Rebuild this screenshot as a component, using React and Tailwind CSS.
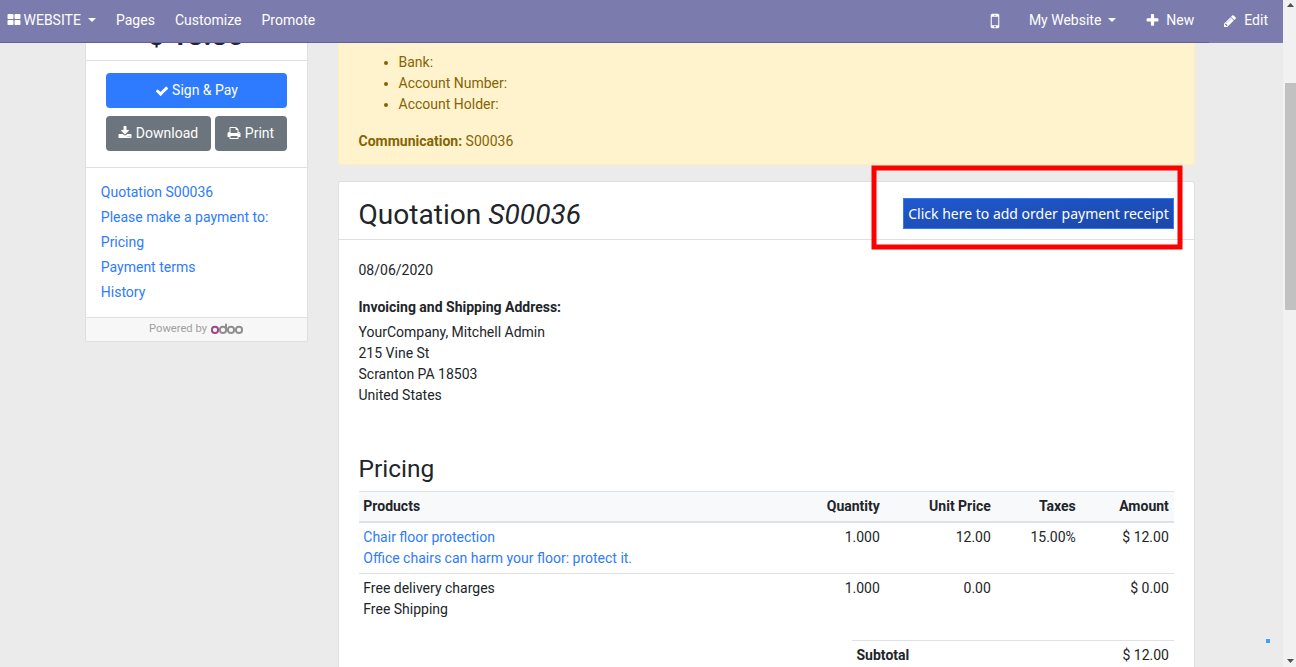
const ICONS = {
  grid: "M832 1024v384q0 52-38 90t-90 38h-512q-52 0-90-38t-38-90v-384q0-52 38-90t90-38h512q52 0 90 38t38 90zm0-768v384q0 52-38 90t-90 38h-512q-52 0-90-38t-38-90v-384q0-52 38-90t90-38h512q52 0 90 38t38 90zm896 768v384q0 52-38 90t-90 38h-512q-52 0-90-38t-38-90v-384q0-52 38-90t90-38h512q52 0 90 38t38 90zm0-768v384q0 52-38 90t-90 38h-512q-52 0-90-38t-38-90v-384q0-52 38-90t90-38h512q52 0 90 38t38 90z",
  check: "M1671 566q0 40-28 68l-724 724-136 136q-28 28-68 28t-68-28l-136-136-362-362q-28-28-28-68t28-68l136-136q28-28 68-28t68 28l294 295 656-657q28-28 68-28t68 28l136 136q28 28 28 68z",
  download: "M1344 1344q0-26-19-45t-45-19-45 19-19 45 19 45 45 19 45-19 19-45zm256 0q0-26-19-45t-45-19-45 19-19 45 19 45 45 19 45-19 19-45zm128-224v320q0 40-28 68t-68 28h-1472q-40 0-68-28t-28-68v-320q0-40 28-68t68-28h465l135 136q58 56 136 56t136-56l136-136h464q40 0 68 28t28 68zm-325-569q17 41-14 70l-448 448q-18 19-45 19t-45-19l-448-448q-31-29-14-70 17-39 59-39h256v-448q0-26 19-45t45-19h256q26 0 45 19t19 45v448h256q42 0 59 39z",
  print: "M448 1536h896v-256h-896v256zm0-640h896v-384h-160q-40 0-68-28t-28-68v-160h-640v640zm1152 64q0-26-19-45t-45-19-45 19-19 45 19 45 45 19 45-19 19-45zm128 0v416q0 13-9.5 22.5t-22.5 9.5h-224v160q0 40-28 68t-68 28h-960q-40 0-68-28t-28-68v-160h-224q-13 0-22.5-9.5t-9.5-22.5v-416q0-79 56.5-135.5t135.5-56.5h64v-544q0-40 28-68t68-28h672q40 0 88 20t76 48l152 152q28 28 48 76t20 88v256h64q79 0 135.5 56.5t56.5 135.5z",
  plus: "M1600 736v192q0 40-28 68t-68 28h-416v416q0 40-28 68t-68 28h-192q-40 0-68-28t-28-68v-416h-416q-40 0-68-28t-28-68v-192q0-40 28-68t68-28h416v-416q0-40 28-68t68-28h192q40 0 68 28t28 68v416h416q40 0 68 28t28 68z",
  pencil: "M491 1536l91-91-235-235-91 91v107h128v128h107zm523-928q0-22-22-22-10 0-17 7l-542 542q-7 7-7 17 0 22 22 22 10 0 17-7l542-542q7-7 7-17zm-54-192l416 416-832 832h-416v-416zm683 96q0 53-37 90l-166 166-416-416 166-165q36-38 90-38 53 0 91 38l235 234q37 39 37 91z",
  mobile: "M976 1408q0-33-23.5-56.5t-56.5-23.5-56.5 23.5-23.5 56.5 23.5 56.5 56.5 23.5 56.5-23.5 23.5-56.5zm208-160v-704q0-13-9.5-22.5t-22.5-9.5h-512q-13 0-22.5 9.5t-9.5 22.5v704q0 13 9.5 22.5t22.5 9.5h512q13 0 22.5-9.5t9.5-22.5zm-192-848q0-16-16-16h-160q-16 0-16 16t16 16h160q16 0 16-16zm288-16v1024q0 52-38 90t-90 38h-512q-52 0-90-38t-38-90v-1024q0-52 38-90t90-38h512q52 0 90 38t38 90z",
};

function Icon({ name, className = "size-[14px]" }) {
  return (
    <svg viewBox="0 0 1792 1792" fill="currentColor" className={`shrink-0 ${className}`}>
      <path d={ICONS[name]} />
    </svg>
  );
}

function Caret() {
  return (
    <svg viewBox="0 0 8 4" fill="currentColor" className="mb-px h-1 w-2 shrink-0">
      <path d="M0 0h8L4 4z" />
    </svg>
  );
}

function Navbar() {
  return (
    <header className="flex h-[43px] shrink-0 flex-col bg-[#7c7bad] text-white">
      <div className="flex h-[42px] items-center pb-px pl-[6.500px] pr-[15px]">
        <span className="flex w-[109.500px] items-center">
          <Icon name="grid" className="mb-px size-[14px]" />
          <span className="ml-[3px] mr-[7.500px]">WEBSITE</span>
          <Caret />
        </span>
        <span className="w-[59px]">Pages</span>
        <span className="w-[86.5px]">Customize</span>
        <span>Promote</span>
        <div className="ml-auto flex items-center">
          <Icon name="mobile" className="mr-[24px] size-[20px]" />
          <span className="mr-[7px]">My Website</span>
          <Caret />
          <Icon name="plus" className="ml-[29px] mr-[6px] size-[15px]" />
          <span>New</span>
          <Icon name="pencil" className="ml-[29px] mr-[7px] size-[14px]" />
          <span>Edit</span>
        </div>
      </div>
      <div className="h-px w-[1209px] bg-[#605fa0]" />
    </header>
  );
}

function OdooLogo() {
  return (
    <svg viewBox="0 0 32 11" fill="none" strokeWidth="1.9" className="mb-[2px] h-[11px] w-[32px]">
      <circle cx="4" cy="6.9" r="3.1" stroke="#a24689" />
      <g stroke="#8f8f8f">
        <circle cx="12" cy="6.9" r="3.1" />
        <circle cx="20" cy="6.9" r="3.1" />
        <circle cx="28" cy="6.9" r="3.1" />
        <path d="M15 0.8v6.100" />
      </g>
    </svg>
  );
}

const LINKS = ["Quotation S00036", "Please make a payment to:", "Pricing", "Payment terms", "History"];

function Sidebar() {
  return (
    <aside className="flex h-[299px] w-[223px] shrink-0 flex-col overflow-hidden rounded-b-[3px] border border-t-0 border-[#dfdfdf] bg-white">
      <div className="flex h-[18px] shrink-0 items-end justify-center overflow-hidden border-b border-[#dfdfdf] pb-[7px] pr-px">
        <b className="text-[28px] leading-[34px] font-bold">$ 13.80</b>
      </div>
      <div className="flex h-[107px] shrink-0 flex-col gap-2 border-b border-[#dfdfdf] px-5 pt-3 text-white">
        <div className="flex h-[35px] items-center justify-center gap-[3.500px] rounded-[4px] bg-[#2e7bff] pr-[0.500px]">
          <Icon name="check" />
          <span>Sign &amp; Pay</span>
        </div>
        <div className="flex gap-1">
          <div className="flex h-[35px] w-[105px] items-center justify-center gap-[3.500px] rounded-[4px] bg-[#6c757d] pr-[0.500px]">
            <Icon name="download" className="mb-px size-[14px]" />
            <span>Download</span>
          </div>
          <div className="flex h-[35px] w-[72px] items-center justify-center gap-[3.500px] rounded-[4px] bg-[#6c757d] pr-[0.500px]">
            <Icon name="print" className="mb-px size-[14px]" />
            <span>Print</span>
          </div>
        </div>
      </div>
      <nav className="flex grow flex-col pl-[14.8px] pt-3 leading-[25px] text-[#2e7bff]">
        {LINKS.map((l) => (
          <span key={l}>{l}</span>
        ))}
      </nav>
      <div className="flex h-[24px] shrink-0 items-center justify-center gap-1 border-t border-[#dfdfdf] bg-[#f7f7f7] pr-px text-[11.2px] text-[#a0a0a0]">
        <span className="pb-[2px]">Powered by</span>
        <OdooLogo />
      </div>
    </aside>
  );
}

function PaymentNotice() {
  return (
    <section className="h-[122px] rounded-b-[4px] border border-t-0 border-[#ffeeba] bg-[#fff3cd] pl-[19.500px] pt-[9px] text-[#856404]">
      <ul className="list-disc pl-[40px]">
        <li>Bank:</li>
        <li>Account Number:</li>
        <li>Account Holder:</li>
      </ul>
      <p className="mt-4">
        <b className="font-bold">Communication:</b> S00036
      </p>
    </section>
  );
}

const COLS = "grid grid-cols-[1fr_110px_111px_85px_93px] pl-[4.8px] pr-[5.2px] text-right";

function PricingTable() {
  return (
    <div className="flex flex-col">
      <div className={`${COLS} h-[32px] border-t border-b-2 border-[#dee2e6] bg-[#f8f9fa] pt-1 font-bold`}>
        <span className="text-left">Products</span>
        <span>Quantity</span>
        <span>Unit Price</span>
        <span>Taxes</span>
        <span>Amount</span>
      </div>
      <div className={`${COLS} h-[50px] pt-1`}>
        <span className="text-left text-[#2e7bff]">
          Chair floor protection
          <br />
          Office chairs can harm your floor: protect it.
        </span>
        <span>1.000</span>
        <span>12.00</span>
        <span>15.00%</span>
        <span>$ 12.00</span>
      </div>
      <div className={`${COLS} h-[67px] border-t border-[#dee2e6] pt-1`}>
        <span className="text-left">
          Free delivery charges
          <br />
          Free Shipping
        </span>
        <span>1.000</span>
        <span>0.00</span>
        <span />
        <span>$ 0.00</span>
      </div>
      <div className="ml-auto flex w-[322px] justify-between border-t border-[#dee2e6] pl-[4.500px] pr-[5px] pt-1">
        <b className="font-bold">Subtotal</b>
        <span>$ 12.00</span>
      </div>
    </div>
  );
}

function Quotation() {
  return (
    <section className="mt-4 grow rounded-t-[3px] border border-b-0 border-[#dfdfdf] bg-white">
      <div className="flex h-[58px] items-center justify-between border-b border-[#dfdfdf] pl-[19.500px] pr-5">
        <h2 className="pt-[9px] text-[28.100px] leading-[34px]">
          Quotation <em>S00036</em>
        </h2>
        <span className="mt-[6px] flex h-[31px] w-[271px] items-center justify-center border border-[#2e7bff] bg-linear-to-br from-[#2059cf] to-[#1b47a8] pb-px font-['Noto_Sans'] text-[14px] text-white">
          Click here to add order payment receipt
        </span>
      </div>
      <div className="pl-[19.500px] pr-5">
        <p className="mt-5">08/06/2020</p>
        <p className="mt-4 font-bold">Invoicing and Shipping Address:</p>
        <p className="mt-1">
          YourCompany, Mitchell Admin
          <br />
          215 Vine St
          <br />
          Scranton PA 18503
          <br />
          United States
        </p>
        <h3 className="mt-[48px] mb-[7px] text-[24.500px] leading-[30px]">Pricing</h3>
        <PricingTable />
      </div>
    </section>
  );
}

function Scrollbar() {
  return (
    <div className="flex h-full w-[13px] shrink-0 flex-col items-end bg-[#f1f1f1] text-[#505050]">
      <svg viewBox="0 0 11 83" fill="currentColor" className="h-[83px] w-[11px]">
        <path d="M2 7h7L5.500 3z" />
      </svg>
      <div className="h-[227px] w-[11px] bg-[#c1c1c1]" />
      <svg viewBox="0 0 11 12" fill="currentColor" className="mt-auto h-[12px] w-[11px]">
        <path d="M2 4h7L5.500 8z" />
      </svg>
    </div>
  );
}

export default function App() {
  return (
    <div className="relative flex h-[667px] w-[1296px] overflow-hidden bg-[#ebebeb] font-['Roboto',sans-serif] text-[14px] leading-[21px] text-[#212529]">
      <div className="flex w-[1283px] flex-col">
        <Navbar />
        <main className="flex grow gap-[30px] pl-[85px]">
          <Sidebar />
          <div className="flex w-[857px] flex-col">
            <PaymentNotice />
            <Quotation />
          </div>
        </main>
      </div>
      <Scrollbar />
      <svg viewBox="0 0 312 85" className="absolute left-[871px] top-[165px] h-[85px] w-[312px]" fill="none">
        <rect x="3" y="3" width="306" height="79" stroke="#ff0000" strokeWidth="5" />
      </svg>
      <div className="absolute left-[1266px] top-[639px] size-1 bg-[#3fa3f0]" />
    </div>
  );
}
